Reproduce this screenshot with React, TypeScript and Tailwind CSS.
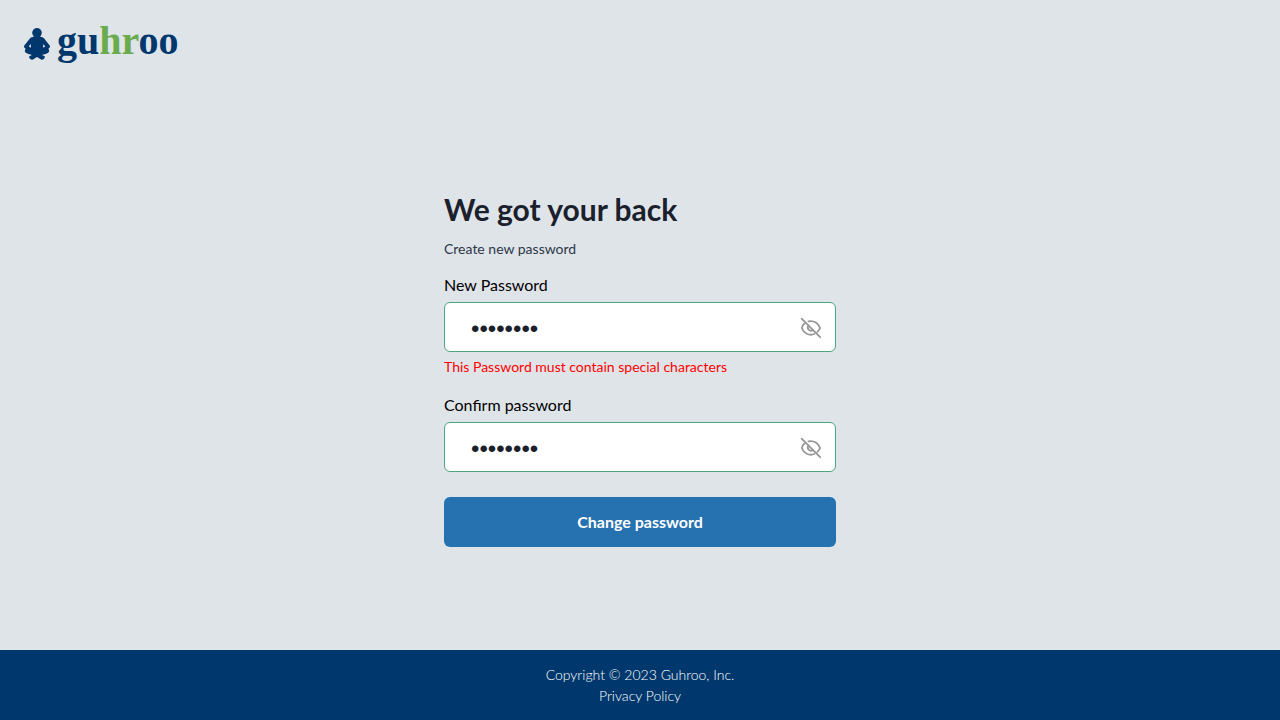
import { useState } from "react";

function Logo() {
  return (
    <a href="#home" aria-label="guhroo" className="flex h-10 w-fit">
      <svg width="156" height="40" viewBox="0 0 156 40" overflow="visible">
        <g fill="#00386d" stroke="#00386d" strokeLinecap="round" strokeLinejoin="round">
          <circle cx="13" cy="8.8" r="4.8" stroke="none" />
          <path stroke="none" d="M7 13.8Q13 10 19 13.8L20 16L18.4 27H7.6L6 16Z" />
          <path fill="none" strokeWidth="4" d="M7.6 15.5Q5 19 2 22.6L6 26M18.4 15.5Q21 19 24 22.6L20 26" />
          <path stroke="none" d="M8 23L1.5 25Q-.5 28 3 29.4L8 31L5.2 32.2Q5 35.6 8.5 35.7L13 33L17.5 35.7Q21 35.6 20.8 32.2L18 31L23 29.4Q26.5 28 24.5 25L18 23Z" />
        </g>
        <text
          x="33"
          y="30"
          className="fill-[#00386d] font-['Liberation_Serif',serif] text-[40px] font-bold"
        >
          gu<tspan className="fill-[#6aab4c]">hr</tspan>oo
        </text>
      </svg>
    </a>
  );
}

function EyeOffIcon() {
  return (
    <svg
      width="22"
      height="22"
      viewBox="0 0 22 22"
      fill="none"
      stroke="#979797"
      strokeWidth="1.8"
      strokeLinecap="round"
      strokeLinejoin="round"
      aria-hidden="true"
    >
      <path d="M1.6 1.6L20.2 20.2" />
      <path d="M8.6 4.3C14 3.2 18.6 6.4 20.1 11C19.6 12.4 18.7 13.7 17.5 14.8" />
      <path d="M4.7 6.2C3.3 7.5 2.3 9.1 1.8 11C3.5 16.2 9 19.2 14.4 17" />
      <path d="M8.3 8.7C6.6 11.4 9.6 15.2 13 13.3" />
    </svg>
  );
}

function PasswordField({ id, label, error }: { id: string; label: string; error?: string }) {
  const [value, setValue] = useState("password");
  const [visible, setVisible] = useState(false);
  return (
    <div className="flex flex-col">
      <label htmlFor={id} className="text-base text-black">
        {label}
      </label>
      <div className="mt-[5px] flex h-[50px] items-center rounded-md border border-[#4fa57c] bg-white pr-[13px]">
        <input
          id={id}
          type={visible ? "text" : "password"}
          value={value}
          onChange={(e) => setValue(e.target.value)}
          aria-describedby={error ? `${id}-error` : undefined}
          className={
            visible
              ? "h-full min-w-0 flex-1 rounded-md bg-transparent pl-[26px] text-base text-[#1a202c] outline-none"
              : "h-full min-w-0 flex-1 rounded-md bg-transparent pt-1 pl-[26px] font-['Liberation_Sans',sans-serif] text-2xl text-[#1a202c] outline-none"
          }
        />
        <button
          type="button"
          className="mt-0.5"
          aria-label={visible ? "Hide password" : "Show password"}
          onClick={() => setVisible(!visible)}
        >
          <EyeOffIcon />
        </button>
      </div>
      {error && (
        <p id={`${id}-error`} className="mt-[5px] text-sm text-[#ff0000]">
          {error}
        </p>
      )}
    </div>
  );
}

export default function App() {
  return (
    <div className="flex min-h-screen flex-col bg-[#dfe4e8] font-['Lato',sans-serif]">
      <header className="px-6 pt-6 pb-6">
        <Logo />
      </header>
      <main className="flex flex-1 items-center justify-center px-4 pb-px">
        <form className="w-full max-w-[392px]" onSubmit={(e) => e.preventDefault()}>
          <h1 className="text-3xl font-bold text-[#1a202c]">We got your back</h1>
          <p className="mt-3 text-sm text-[#2d3748]">Create new password</p>
          <div className="mt-3.5 flex flex-col gap-4">
            <PasswordField
              id="new-password"
              label="New Password"
              error="This Password must contain special characters"
            />
            <PasswordField id="confirm-password" label="Confirm password" />
          </div>
          <button
            type="submit"
            className="mt-[25px] h-[50px] w-full rounded-md bg-[#2672b1] text-base font-bold text-white"
          >
            Change password
          </button>
        </form>
      </main>
      <footer className="flex flex-col items-center bg-[#00386d] py-3.5 text-sm leading-[21px] font-light text-white">
        <p>Copyright © 2023 Guhroo, Inc.</p>
        <a href="#privacy">Privacy Policy</a>
      </footer>
    </div>
  );
}
